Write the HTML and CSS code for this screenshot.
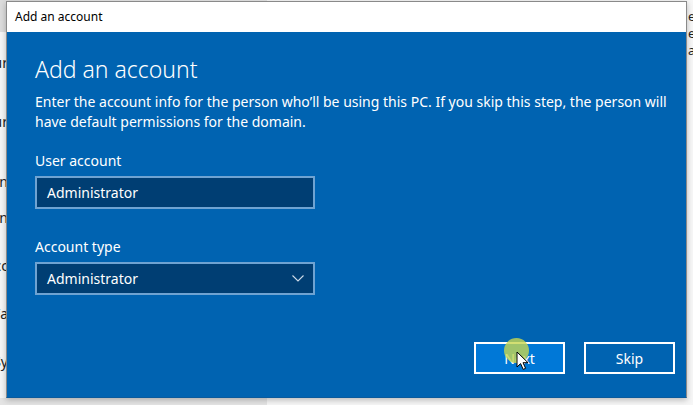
FILE: index.html
```html
<!DOCTYPE html>
<html>
<head>
<meta charset="utf-8">
<link rel="stylesheet" href="styles.css">
</head>
<body>
<div class="desktop">
  <div class="bg-left">
    <span class="frag f1">Your</span>
    <span class="frag f2">Your</span>
    <span class="frag f3">In</span>
    <span class="frag f4">Sign</span>
    <span class="frag f5">Acc</span>
    <span class="frag f6">Fa</span>
    <span class="frag f7">Sy</span>
  </div>
  <div class="bg-right">
    <span class="frag r1">ec</span>
    <span class="frag r2">ev</span>
    <span class="frag r3">ai</span>
  </div>

  <div class="dialog">
    <div class="titlebar">Add an account</div>
    <div class="body">
      <h1 class="heading">Add an account</h1>
      <p class="desc">Enter the account info for the person who’ll be using this PC. If you skip this step, the person will have default permissions for the domain.</p>
      <div class="field">
        <label class="label">User account</label>
        <div class="box">Administrator</div>
      </div>
      <div class="field">
        <label class="label">Account type</label>
        <div class="box select">
          <span>Administrator</span>
          <svg class="chev" width="12" height="7" viewBox="0 0 12 7"><path d="M0.5 0.5 L6 6 L11.5 0.5" fill="none" stroke="#cfdbe8" stroke-width="1.1"/></svg>
        </div>
      </div>
      <div class="actions">
        <button class="btn primary">Next</button>
        <button class="btn">Skip</button>
      </div>
    </div>
    <div class="pointer">
      <span class="halo"></span>
      <svg class="cursor" width="14" height="20" viewBox="0 0 14 20"><path d="M1 1 L1 16 L4.6 12.6 L7.2 18.4 L9.6 17.3 L7 11.7 L12 11.7 Z" fill="#fff" stroke="#000" stroke-width="1" stroke-linejoin="round"/></svg>
    </div>
  </div>
</div>
</body>
</html>
```

FILE: styles.css
```css
* { box-sizing: border-box; }
html, body { margin: 0; padding: 0; }
body {
  width: 693px;
  height: 405px;
  overflow: hidden;
  background: #f2f2f2;
  font-family: "Noto Sans", "Open Sans", sans-serif;
}
.desktop {
  position: relative;
  width: 693px;
  height: 405px;
  background: linear-gradient(90deg, #e4e4e4 0 267px, #f6f6f6 267px);
}
.bg-left {
  position: absolute;
  left: 0; top: 0;
  width: 60px; height: 398px;
  background: linear-gradient(#dcdcdc 0 32px, #f6f6f6 32px);
}
.bg-right {
  position: absolute;
  right: 0; top: 0;
  width: 60px; height: 398px;
  background: #f7f7f7;
}
.frag {
  position: absolute;
  font-size: 14px;
  line-height: 16px;
  color: #222;
  white-space: nowrap;
}
.bg-left .frag { right: 52px; }
.f1 { top: 55px; }
.f2 { top: 114px; }
.f3 { top: 174px; }
.f4 { top: 210px; }
.f5 { top: 258px; }
.f6 { top: 306px; }
.f7 { top: 354px; }
.bg-right .frag { left: 55px; font-size: 13px; line-height: 15px; }
.r1 { top: 9px; }
.r2 { top: 26px; }
.r3 { top: 43px; }

.dialog {
  position: absolute;
  left: 6px;
  top: 1px;
  width: 681px;
  height: 397px;
  display: flex;
  flex-direction: column;
  background: #0063b1;
  border: 1px solid #8a8a8a;
  border-bottom-color: #0a5a9c;
  box-shadow: 0 2px 6px rgba(0,0,0,0.25);
}
.titlebar {
  height: 30px;
  flex: none;
  background: #fff;
  color: #000;
  font-size: 12px;
  line-height: 30px;
  padding-left: 8px;
}
.body {
  flex: 1;
  padding: 22px 11px 0 28px;
  color: #fff;
  display: flex;
  flex-direction: column;
}
.heading {
  margin: 0;
  font-size: 23px;
  font-weight: 300;
  line-height: 30px;
  letter-spacing: 0;
}
.desc {
  margin: 8px 0 0;
  font-size: 14px;
  line-height: 20px;
  width: 645px;
}
.field {
  display: flex;
  flex-direction: column;
}
.field:first-of-type { margin-top: 19px; }
.field + .field { margin-top: 28px; }
.label {
  font-size: 14px;
  line-height: 20px;
  margin-bottom: 5px;
}
.box {
  width: 280px;
  height: 33px;
  border: 2px solid #6fa3d2;
  background: #003e73;
  font-size: 14px;
  line-height: 29px;
  padding-left: 10px;
  color: #fff;
}
.select {
  display: flex;
  justify-content: space-between;
  align-items: center;
  padding-right: 9px;
}
.chev { display: block; }
.actions {
  margin-top: auto;
  margin-bottom: 23px;
  display: flex;
  justify-content: flex-end;
  gap: 19px;
}
.btn {
  width: 91px;
  height: 32px;
  border: 2px solid #fff;
  background: #0063b1;
  color: #fff;
  font-family: inherit;
  font-size: 14px;
  padding: 0;
}
.btn.primary { background: #0078d7; }
.pointer {
  position: absolute;
  left: 497px;
  top: 336px;
  width: 30px;
  height: 30px;
}
.halo {
  position: absolute;
  left: 0; top: 0;
  width: 25px; height: 25px;
  border-radius: 50%;
  background: rgba(200, 215, 80, 0.8);
}
.cursor {
  position: absolute;
  left: 12px;
  top: 13px;
}
```
